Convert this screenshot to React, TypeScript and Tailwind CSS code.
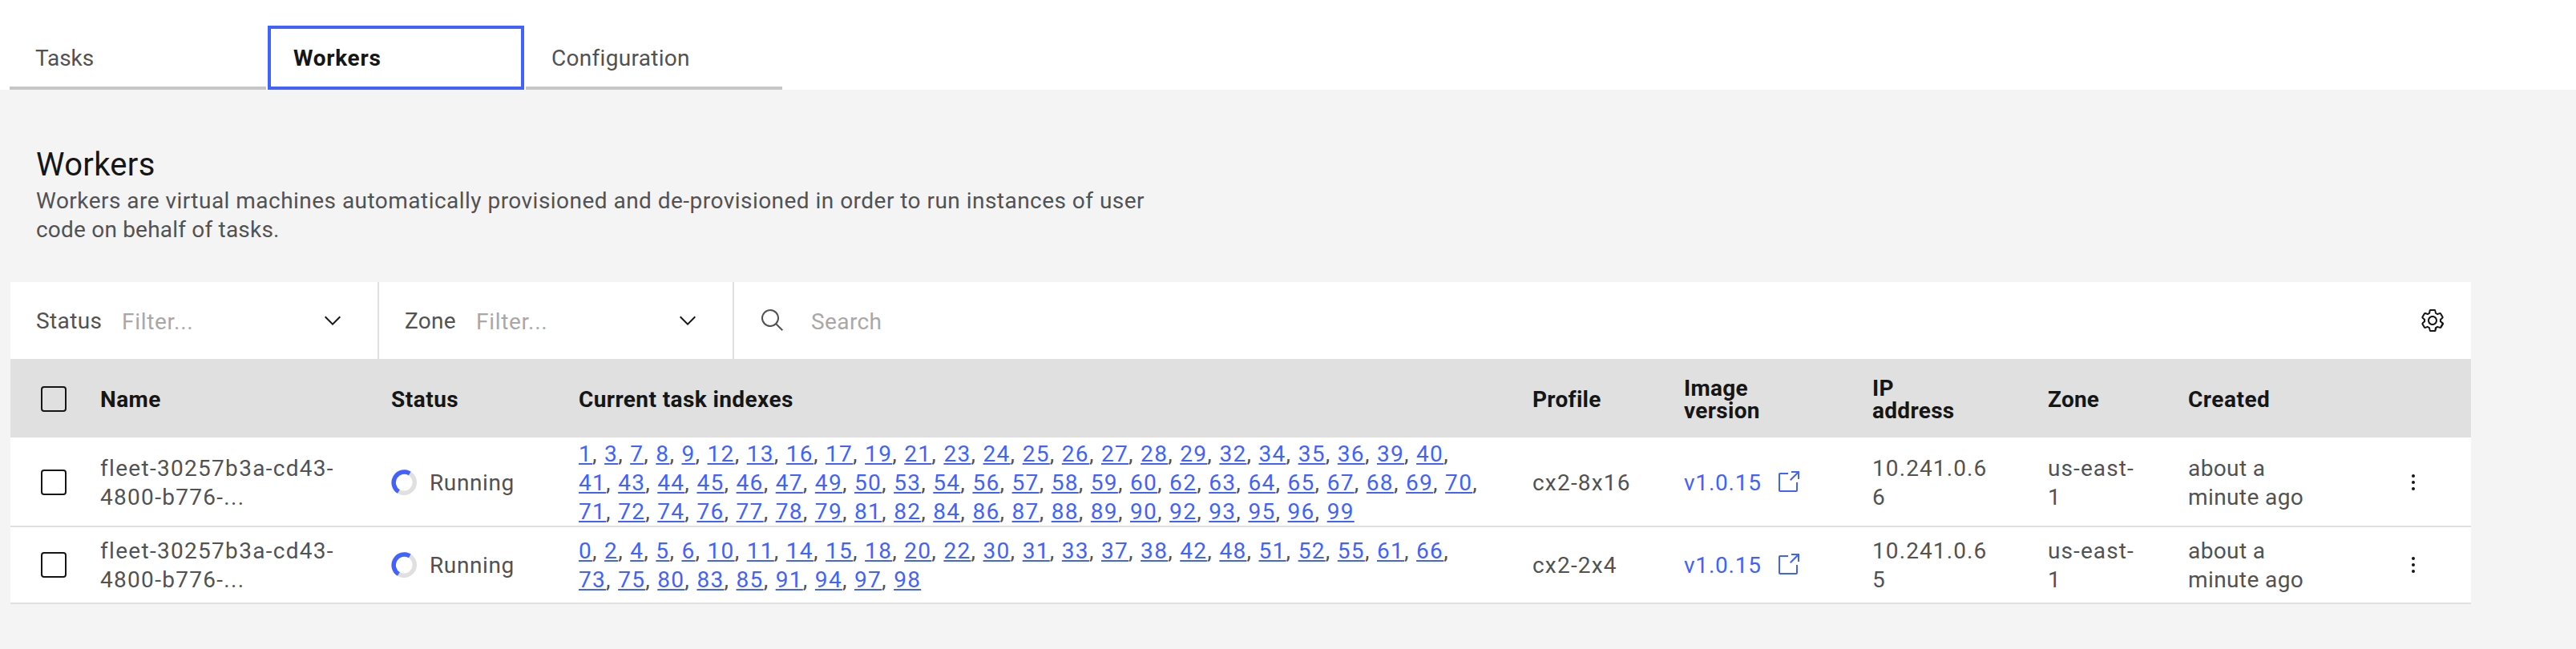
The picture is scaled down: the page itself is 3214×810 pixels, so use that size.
import React from "react";

const tabs = [
  { label: "Tasks", active: false, spacing: "tracking-[-0.1px]" },
  { label: "Workers", active: true, spacing: "tracking-[0.7px]" },
  { label: "Configuration", active: false, spacing: "tracking-[0.3px]" },
];

const workers = [
  {
    indexes: [
      1, 3, 7, 8, 9, 12, 13, 16, 17, 19, 21, 23, 24, 25, 26, 27, 28, 29, 32, 34, 35, 36, 39, 40, 41, 43, 44, 45, 46, 47,
      49, 50, 53, 54, 56, 57, 58, 59, 60, 62, 63, 64, 65, 67, 68, 69, 70, 71, 72, 74, 76, 77, 78, 79, 81, 82, 84, 86, 87,
      88, 89, 90, 92, 93, 95, 96, 99,
    ],
    profile: "cx2-8x16",
    ip: "10.241.0.66",
    row: "h-[112px] pt-[2px]",
  },
  {
    indexes: [
      0, 2, 4, 5, 6, 10, 11, 14, 15, 18, 20, 22, 30, 31, 33, 37, 38, 42, 48, 51, 52, 55, 61, 66, 73, 75, 80, 83, 85, 91,
      94, 97, 98,
    ],
    profile: "cx2-2x4",
    ip: "10.241.0.65",
    row: "h-[96px]",
  },
];

const columns = "grid grid-cols-[112px_363px_234px_1190px_189px_235px_219px_175px_200px_1fr] items-center";

function Chevron() {
  return (
    <svg className="size-8 shrink-0" viewBox="0 0 16 16" fill="#161616">
      <path d="M8 11L3 6 3.7 5.3 8 9.6 12.3 5.3 13 6z" />
    </svg>
  );
}

function SearchIcon() {
  return (
    <svg className="size-8 shrink-0" viewBox="0 0 32 32" fill="#525252">
      <path d="M29 27.586l-7.552-7.552a11.018 11.018 0 1 0-1.414 1.414L27.586 29ZM4 13a9 9 0 1 1 9 9A9.01 9.01 0 0 1 4 13Z" />
    </svg>
  );
}

function GearIcon() {
  return (
    <svg className="size-8 shrink-0" viewBox="0 0 16 16" fill="#161616" fillRule="evenodd">
      <path d="M13.5 8.4c0-.1 0-.3 0-.4 0-.1 0-.3 0-.4l1-.8c.4-.3.4-.9.2-1.3l-1.2-2C13.3 3.2 13 3 12.6 3c-.1 0-.2 0-.3.1l-1.2.4c-.2-.1-.4-.3-.7-.4l-.3-1.3C10.1 1.3 9.7 1 9.2 1H6.8c-.5 0-.9.3-1 .8L5.6 3.1c-.3.1-.5.2-.7.4L3.7 3C3.6 3 3.5 3 3.4 3 3 3 2.7 3.2 2.5 3.5l-1.2 2c-.2.4-.1.9.2 1.3l1 .8c0 .1 0 .3 0 .4 0 .1 0 .3 0 .4l-1 .8c-.3.4-.4.9-.2 1.3l1.2 2c.2.3.5.5.9.5.1 0 .2 0 .3-.1l1.2-.4c.2.1.4.3.7.4l.3 1.3c.1.5.5.8 1 .8h2.4c.5 0 .9-.3 1-.8l.3-1.3c.2-.1.4-.2.7-.4l1.2.4c.1 0 .2.1.3.1.4 0 .7-.2.9-.5l1.2-2c.2-.4.2-.9-.2-1.3z M12.6 12l-1.7-.6c-.4.3-.9.6-1.4.8L9.2 14H6.8l-.4-1.8c-.5-.2-.9-.5-1.4-.8L3.4 12l-1.2-2 1.4-1.2c-.1-.5-.1-1.1 0-1.6L2.2 6l1.2-2 1.7.6C5.5 4.2 6 4 6.5 3.8L6.8 2h2.4l.4 1.8c.5.2.9.5 1.4.8L12.6 4l1.2 2-1.4 1.2c.1.5.1 1.1 0 1.6l1.4 1.2z" />
      <path d="M8 11c-1.7 0-3-1.3-3-3s1.3-3 3-3 3 1.3 3 3-1.3 3-3 3z M8 6C6.9 6 6 6.9 6 8s.9 2 2 2 2-.9 2-2S9.1 6 8 6z" />
    </svg>
  );
}

function LaunchIcon() {
  return (
    <svg className="size-8 shrink-0" viewBox="0 0 32 32" fill="#4262ff">
      <path d="M26 28H6a2.003 2.003 0 0 1-2-2V6a2.003 2.003 0 0 1 2-2h10v2H6v20h20V16h2v10a2.003 2.003 0 0 1-2 2z" />
      <path d="M20 2v2h6.586L18 12.586 19.414 14 28 5.414V12h2V2z" />
    </svg>
  );
}

function Spinner() {
  return (
    <svg className="size-8 shrink-0" viewBox="0 0 32 32" fill="none" strokeWidth="5.4">
      <circle cx="16" cy="16" r="13.3" stroke="#e0e0e0" />
      <path d="M23.24 4.84A13.3 13.3 0 0 0 9.35 27.52" stroke="#4262ff" />
    </svg>
  );
}

function Menu() {
  return (
    <svg className="size-8 shrink-0" viewBox="0 0 32 32" fill="#161616">
      <circle cx="16" cy="8" r="2" />
      <circle cx="16" cy="16" r="2" />
      <circle cx="16" cy="24" r="2" />
    </svg>
  );
}

function Checkbox() {
  return <span className="ml-[38px] block size-8 rounded-[4px] border-2 border-[#161616]" />;
}

export default function App() {
  return (
    <div className="h-[810px] w-[3214px] overflow-hidden bg-[#f4f4f4] font-[Roboto,sans-serif] text-[28px] leading-[36px] text-[#525252]">
      <nav className="flex h-[112px] items-end gap-[2px] bg-white pl-3">
        {tabs.map((t) => (
          <div
            key={t.label}
            className={
              t.active
                ? "flex h-20 w-80 items-center border-4 border-[#4262ff] pt-[2px] pl-[28px] font-bold text-[#161616]"
                : "flex h-20 w-80 items-center border-b-4 border-[#c6c6c6] pt-1.5 pl-8"
            }
          >
            <span className={t.spacing}>{t.label}</span>
          </div>
        ))}
      </nav>

      <header className="h-[240px] pt-[69px] pl-[45px]">
        <h1 className="text-[40px] leading-[50px] tracking-[0.3px] text-[#161616]">Workers</h1>
        <p className="mt-[2px] tracking-[0.47px]">
          Workers are virtual machines automatically provisioned and de-provisioned in order to run instances of user
          <br />
          <span className="tracking-[0.2px]">code on behalf of tasks.</span>
        </p>
      </header>

      <main className="ml-[13px] w-[3070px]">
        <div className="flex h-24 items-center bg-white">
          <div className="flex h-full w-[460px] items-center border-r-2 border-[#e0e0e0] pr-[40px] pl-[32px]">
            <span className="w-[107px] pt-px tracking-[0.4px]">Status</span>
            <span className="grow pt-[3px] tracking-[0.7px] text-[#a8a8a8]">Filter...</span>
            <Chevron />
          </div>
          <div className="flex h-full w-[443px] items-center border-r-2 border-[#e0e0e0] pr-[40px] pl-[32px]">
            <span className="w-[89px] pt-px tracking-[0.3px]">Zone</span>
            <span className="grow pt-[3px] tracking-[0.7px] text-[#a8a8a8]">Filter...</span>
            <Chevron />
          </div>
          <div className="flex h-full grow items-center pr-[32px] pl-[32px]">
            <SearchIcon />
            <span className="grow pt-[3px] pl-[32px] tracking-[0.4px] text-[#a8a8a8]">Search</span>
            <GearIcon />
          </div>
        </div>

        <div className={`${columns} h-[98px] bg-[#e0e0e0] pt-[2px] font-bold leading-[28px] text-[#161616] *:pt-[2px]`}>
          <Checkbox />
          <span className="tracking-[0.4px]">Name</span>
          <span className="tracking-[0.5px]">Status</span>
          <span className="tracking-[0.4px]">Current task indexes</span>
          <span className="tracking-[0.3px]">Profile</span>
          <span className="tracking-[0.3px]">
            Image
            <br />
            version
          </span>
          <span className="tracking-[0.3px]">
            IP
            <br />
            address
          </span>
          <span className="tracking-[0.2px]">Zone</span>
          <span className="tracking-[0.5px]">Created</span>
        </div>

        {workers.map((w) => (
          <div key={w.profile} className={`${columns} ${w.row} border-b-2 border-[#e0e0e0] bg-white`}>
            <Checkbox />
            <span className="pt-[2px] tracking-[1.3px]">
              fleet-30257b3a-cd43-
              <br />
              4800-b776-...
            </span>
            <span className="flex items-center gap-4">
              <Spinner />
              <span className="pt-[2px] tracking-[0.6px]">Running</span>
            </span>
            <span className="-my-4 w-[1127px] pt-[2px] tracking-[1.3px]">
              {w.indexes.map((n, i) => (
                <React.Fragment key={n}>
                  <a className="text-[#4262ff] underline decoration-2 underline-offset-[2px]">{n}</a>
                  {i < w.indexes.length - 1 ? ", " : ""}
                </React.Fragment>
              ))}
            </span>
            <span className="pt-[2px] tracking-[1.2px]">{w.profile}</span>
            <span className="flex items-center text-[#4262ff]">
              <span className="w-[114px] pt-[2px] tracking-[0.8px]">v1.0.15</span>
              <LaunchIcon />
            </span>
            <span className="w-[150px] pt-[2px] tracking-[1.1px] break-all">{w.ip}</span>
            <span className="pt-[2px] tracking-[1.1px]">
              us-east-
              <br />1
            </span>
            <span className="pt-[2px] tracking-[0.4px]">
              about a
              <br />
              minute ago
            </span>
            <span className="flex justify-end pr-[56px]">
              <Menu />
            </span>
          </div>
        ))}
      </main>
    </div>
  );
}
